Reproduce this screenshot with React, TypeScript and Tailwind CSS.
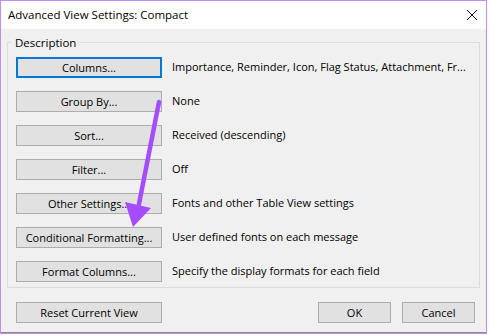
import React from 'react'

interface ViewRow {
  label: string
  value: string
  focused?: boolean
}

const rows: ViewRow[] = [
  { label: 'Columns...', value: 'Importance, Reminder, Icon, Flag Status, Attachment, Fr...', focused: true },
  { label: 'Group By...', value: 'None' },
  { label: 'Sort...', value: 'Received (descending)' },
  { label: 'Filter...', value: 'Off' },
  { label: 'Other Settings...', value: 'Fonts and other Table View settings' },
  { label: 'Conditional Formatting...', value: 'User defined fonts on each message' },
  { label: 'Format Columns...', value: 'Specify the display formats for each field' },
]

function WinButton({ label, focused, className = '' }: { label: string; focused?: boolean; className?: string }) {
  return (
    <button
      className={
        focused
          ? `h-[21px] bg-[#e1e1e1] border-2 border-[#0078d7] text-black leading-none ${className}`
          : `h-[21px] bg-[#e1e1e1] border border-[#adadad] text-black leading-none ${className}`
      }
    >
      {label}
    </button>
  )
}

export default function App() {
  return (
    <div
      className="w-[489px] h-[335px] bg-white overflow-hidden relative text-[11px] text-black"
      style={{ fontFamily: '"Open Sans", "Noto Sans", sans-serif' }}
    >
      <div className="w-[487px] h-[334px] border border-[#c38cee] flex flex-col">
        {/* Title bar */}
        <div className="h-[28px] bg-white flex items-center justify-between pl-[7px] pr-[8px] shrink-0">
          <span className="text-[11.5px]">Advanced View Settings: Compact</span>
          <svg width="12" height="12" viewBox="0 0 12 12">
            <path d="M1 1 L11 11 M11 1 L1 11" stroke="#111" strokeWidth="1" />
          </svg>
        </div>

        {/* Body */}
        <div className="flex-1 bg-[#f0f0f0] border-b border-[#8a8a8a] px-[6px] pt-[8px] flex flex-col">
          <fieldset className="border border-[#dcdcdc] pl-[8px] pr-[8px] pt-[8px] pb-[5px] flex flex-col gap-[13px] m-0 min-w-0">
            <legend className="-ml-[4px] px-[3px] leading-none text-[11.5px]">Description</legend>
            {rows.map((row) => (
              <div key={row.label} className="flex items-center gap-[10px]">
                <WinButton label={row.label} focused={row.focused} className="w-[146px] shrink-0" />
                <span className="whitespace-nowrap">{row.value}</span>
              </div>
            ))}
          </fieldset>

          <div className="flex items-center mt-[14px] pl-[9px] pr-[5px]">
            <WinButton label="Reset Current View" className="w-[146px]" />
            <div className="flex-1" />
            <WinButton label="OK" className="w-[73px]" />
            <WinButton label="Cancel" className="w-[73px] ml-[11px]" />
          </div>
        </div>
      </div>

      {/* Annotation arrow */}
      <svg className="absolute left-0 top-0 pointer-events-none" width="489" height="335" viewBox="0 0 489 335">
        <path d="M159 102 L139 204" stroke="#a64cff" strokeWidth="4.5" strokeLinecap="round" />
        <path d="M125 202 L151 208 L133 227 Z" fill="#a64cff" />
      </svg>
    </div>
  )
}
